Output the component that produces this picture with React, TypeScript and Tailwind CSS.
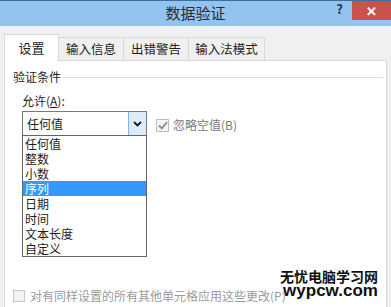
import { useState } from "react";

const options = ["任何值", "整数", "小数", "序列", "日期", "时间", "文本长度", "自定义"];
const tabs = ["设置", "输入信息", "出错警告", "输入法模式"];

export default function App() {
  const [selected, setSelected] = useState("序列");

  return (
    <div
      className="relative w-[391px] h-[307px] overflow-hidden bg-[#f0f0f0] text-[#1e1e1e]"
      style={{ fontFamily: '"Noto Sans CJK SC", "Noto Sans", sans-serif' }}
    >
      {/* title bar */}
      <div className="flex h-[26px] border-t border-[#3c6ea0] bg-[#93c4f0]">
        <div className="w-[60px]" />
        <div className="flex-1 pt-[2px] text-center text-[15px] leading-[20px] text-[#2b2b2b]">数据验证</div>
        <div className="flex w-[60px] items-start justify-end">
          <span className="mr-[9px] mt-[1px] text-[13px] font-bold leading-[14px] text-[#23384f]">?</span>
          <span className="flex h-[19px] w-[39px] items-center justify-center bg-[#c9524d] text-[13px] font-bold leading-none text-white">✕</span>
        </div>
      </div>

      {/* tabs */}
      <div className="mt-[8px] flex items-end pl-[4px]">
        {tabs.map((t, i) =>
          i === 0 ? (
            <div
              key={t}
              className="relative z-10 mb-[-1px] flex h-[27px] w-[55px] items-center justify-center border border-b-0 border-[#d9d9d9] bg-white text-[13px] text-[#1e1e1e]"
            >
              {t}
            </div>
          ) : (
            <div
              key={t}
              className={`flex h-[23px] items-center justify-center border border-l-0 border-b-0 border-[#d9d9d9] bg-[#f0f0f0] text-[12.5px] text-[#1e1e1e] ${
                i === 3 ? "w-[76px]" : "w-[65px]"
              }`}
            >
              {t}
            </div>
          )
        )}
      </div>

      {/* panel */}
      <div className="ml-[4px] mr-[4px] h-[260px] border border-[#d9d9d9] bg-white pl-[8px] pr-[3px]">
        <div className="mt-[8px] flex items-center">
          <span className="text-[12px] leading-[16px]">验证条件</span>
          <div className="ml-[2px] h-px flex-1 bg-[#dcdcdc]" />
        </div>

        <div className="ml-[9px] mt-[8px] text-[12px] leading-[16px]">
          允许(<span className="underline">A</span>):
        </div>

        <div className="ml-[9px] mt-[2px] flex items-start">
          <div className="flex w-[125px] flex-col">
            <div className="flex h-[25px] border border-[#7a7a7a] bg-white">
              <div className="flex flex-1 items-center pl-[4px] text-[12px]">{selected === "序列" ? "任何值" : selected}</div>
              <div className="flex w-[18px] items-center justify-center border-l border-[#7eb4ea] bg-[#dcecfc]">
                <svg width="9" height="6" viewBox="0 0 9 6">
                  <path d="M1 1 L4.5 4.5 L8 1" fill="none" stroke="#1a1a1a" strokeWidth="1.8" />
                </svg>
              </div>
            </div>
            <div className="mt-[-1px] border border-[#646464] bg-white">
              {options.map(o => (
                <div
                  key={o}
                  onClick={() => setSelected(o)}
                  className={`h-[15px] overflow-hidden pl-[2px] text-[12px] leading-[15px] ${
                    o === selected ? "bg-[#3399ff] text-white" : "text-[#1e1e1e]"
                  }`}
                >
                  {o}
                </div>
              ))}
            </div>
          </div>

          <div className="ml-[9px] mt-[5px] flex items-center">
            <div className="flex h-[13px] w-[13px] items-center justify-center border border-[#bcbcbc] bg-[#f4f4f4]">
              <svg width="10" height="9" viewBox="0 0 10 9">
                <path d="M1 4.5 L3.8 7.3 L9 1.2" fill="none" stroke="#8c8c8c" strokeWidth="1.8" />
              </svg>
            </div>
            <span className="ml-[4px] text-[12px] text-[#7a7a7a]">忽略空值(B)</span>
          </div>
        </div>

        <div className="mt-[30px] flex items-center">
          <div className="h-[12px] w-[12px] border border-[#c8c8c8] bg-[#f2f2f2]" />
          <span className="ml-[5px] text-[12px] text-[#9a9a9a]">对有同样设置的所有其他单元格应用这些更改(P)</span>
        </div>
      </div>

      {/* watermark */}
      <div className="absolute left-[280px] top-[269px] flex flex-col items-center leading-none text-[#111]">
        <span className="text-[14px] font-bold">无忧电脑学习网</span>
        <span className="mt-[-1px] pl-[3px] text-[17px] font-bold" style={{ fontFamily: '"Liberation Sans", Arial, sans-serif' }}>
          wypcw.com
        </span>
      </div>
    </div>
  );
}
